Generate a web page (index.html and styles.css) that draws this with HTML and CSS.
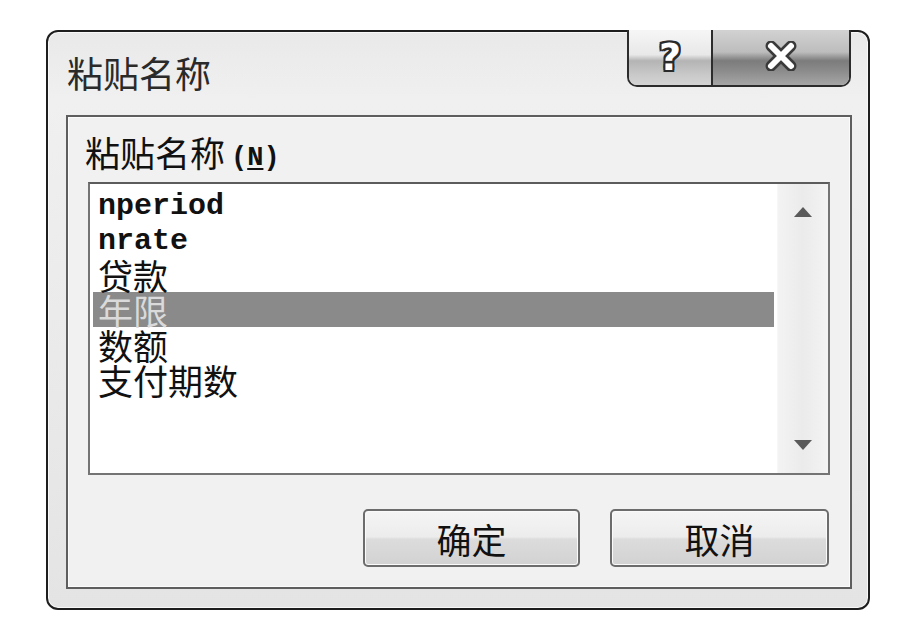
FILE: index.html
```html
<!DOCTYPE html>
<html lang="zh-CN">
<head>
  <meta charset="UTF-8" />
  <title>粘贴名称</title>
  <link rel="stylesheet" href="styles.css">
</head>
<body>
  <div class="window">
    <div class="titlebar">
      <div class="title">粘贴名称</div>
      <div class="caption-btns">
        <div class="cap-btn help"><span class="qmark">?</span></div>
        <div class="cap-btn close">
          <svg width="34" height="30" viewBox="0 0 34 30">
            <g stroke-linecap="round">
              <path d="M7 5 L27 25 M27 5 L7 25" stroke="#3a3a3a" stroke-width="11" />
              <path d="M7 5 L27 25 M27 5 L7 25" stroke="#ffffff" stroke-width="6" />
            </g>
          </svg>
        </div>
      </div>
    </div>

    <div class="client">
      <div class="label">粘贴名称<span class="accel">(<u>N</u>)</span></div>
      <div class="listbox">
        <div class="items">
          <div class="row mono">nperiod</div>
          <div class="row mono">nrate</div>
          <div class="row">贷款</div>
          <div class="row selected">年限</div>
          <div class="row">数额</div>
          <div class="row">支付期数</div>
        </div>
        <div class="scrollbar">
          <div class="arrow">
            <svg width="20" height="12" viewBox="0 0 20 12"><polygon points="10,1 19,11 1,11" fill="#5a5a5a" /></svg>
          </div>
          <div class="arrow">
            <svg width="20" height="12" viewBox="0 0 20 12"><polygon points="1,1 19,1 10,11" fill="#5a5a5a" /></svg>
          </div>
        </div>
      </div>
      <div class="actions">
        <button class="btn ok">确定</button>
        <button class="btn cancel">取消</button>
      </div>
    </div>
  </div>
</body>
</html>
```

FILE: styles.css
```css
body {
  margin: 0;
  background: #fff;
  font-family: "Noto Sans CJK SC", "Noto Sans", sans-serif;
  color: #111;
}

.window {
  box-sizing: border-box;
  width: 824px;
  height: 580px;
  margin: 30px 0 0 46px;
  border: 2px solid #1e1e1e;
  border-radius: 12px;
  background: linear-gradient(#e9e9e9, #f0f0f0 12%, #e4e4e4 100%);
  box-shadow: inset 0 0 0 1px #f8f8f8;
  display: flex;
  flex-direction: column;
}

.titlebar {
  height: 83px;
  display: flex;
  justify-content: space-between;
  align-items: flex-start;
  flex-shrink: 0;
}

.title {
  margin: 22px 0 0 19px;
  font-size: 36px;
  line-height: 36px;
  color: #2a2a2a;
}

.caption-btns {
  display: flex;
  margin: -2px 17px 0 0;
  border: 2px solid #2c2c2c;
  border-top: none;
  border-radius: 0 0 10px 10px;
  overflow: hidden;
  height: 55px;
}

.cap-btn {
  display: flex;
  align-items: center;
  justify-content: center;
}

.help {
  width: 82px;
  border-right: 2px solid #2c2c2c;
  background: linear-gradient(#f6f6f6, #e8e8e8 45%, #b4b4b4 56%, #c8c8c8 80%, #d4d4d4);
}

.qmark {
  font-family: "DejaVu Sans", sans-serif;
  font-weight: bold;
  font-size: 38px;
  line-height: 38px;
  color: #fff;
  margin-top: -2px;
  text-shadow: -2px 0 #2a2a2a, 2px 0 #2a2a2a, 0 -2px #2a2a2a, 0 2px #2a2a2a,
    -2px -2px #2a2a2a, 2px -2px #2a2a2a, -2px 2px #2a2a2a, 2px 2px #2a2a2a;
}

.close {
  width: 136px;
  background: linear-gradient(#d2d2d2, #bdbdbd 40%, #7c7c7c 56%, #8c8c8c 75%, #a6a6a6);
}

.close svg {
  margin-top: -4px;
}

.client {
  flex: 1;
  margin: 0 16px 19px 18px;
  border: 2px solid #5e5e5e;
  background: #f1f1f1;
  box-shadow: inset 0 0 0 1px #fbfbfb;
  padding: 17px 20px 0 20px;
  display: flex;
  flex-direction: column;
}

.label {
  height: 35px;
  font-size: 35px;
  line-height: 35px;
  margin-left: -3px;
  color: #111;
  white-space: nowrap;
}

.accel {
  font-family: "Liberation Mono", monospace;
  font-weight: bold;
  font-size: 27px;
  line-height: 1;
  vertical-align: 2px;
  margin-left: 6px;
}

.accel u {
  text-underline-offset: 3px;
}

.listbox {
  margin-top: 13px;
  height: 293px;
  flex-shrink: 0;
  box-sizing: border-box;
  border: 2px solid #747474;
  border-top-color: #5c5c5c;
  background: #fff;
  display: flex;
}

.items {
  flex: 1;
  padding: 3px 3px 0 3px;
}

.row {
  height: 35px;
  line-height: 35px;
  font-size: 35px;
  padding-left: 5px;
  color: #111;
  white-space: nowrap;
}

.row.mono {
  box-sizing: border-box;
  padding-top: 3px;
  line-height: 32px;
  font-family: "Liberation Mono", monospace;
  font-weight: bold;
  font-size: 30px;
}

.row.selected {
  background: #8a8a8a;
  color: #dadada;
}

.scrollbar {
  width: 50px;
  background: linear-gradient(90deg, #f3f3f3, #ebebeb 50%, #f3f3f3);
  border-left: 1px solid #f7f7f7;
  display: flex;
  flex-direction: column;
  justify-content: space-between;
}

.arrow {
  height: 56px;
  display: flex;
  align-items: center;
  justify-content: center;
}

.actions {
  display: flex;
  justify-content: flex-end;
  gap: 30px;
  margin-top: 34px;
  padding-right: 1px;
}

.btn {
  height: 58px;
  box-sizing: border-box;
  border: 2px solid #6c6c6c;
  border-radius: 5px;
  background: linear-gradient(#f5f5f5, #ececec 48%, #dcdcdc 52%, #d2d2d2);
  box-shadow: inset 0 0 0 1px #fafafa;
  font-family: "Noto Sans CJK SC", sans-serif;
  font-size: 35px;
  line-height: 35px;
  color: #111;
  padding: 0;
}

.ok {
  width: 217px;
}

.cancel {
  width: 219px;
}
```
